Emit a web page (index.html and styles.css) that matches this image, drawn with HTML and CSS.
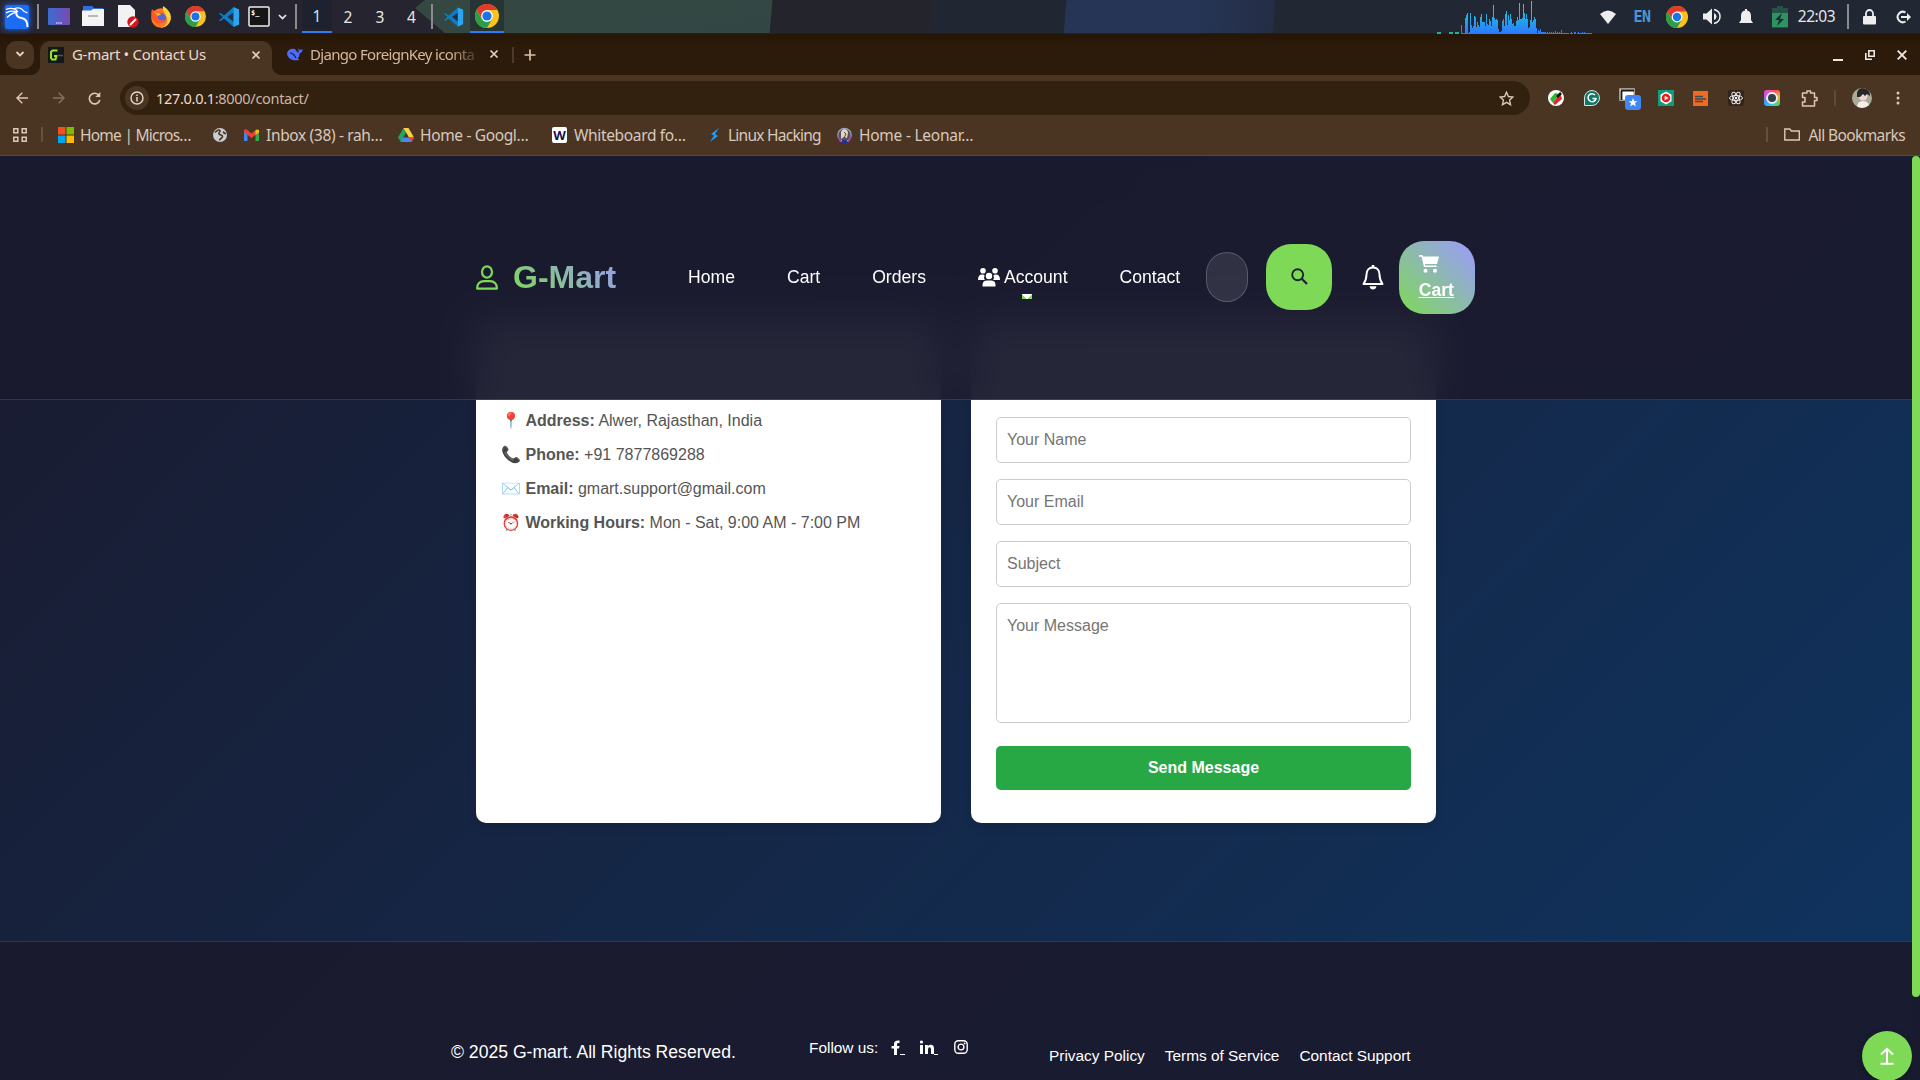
FILE: index.html
```
<!DOCTYPE html>
<html lang="en">
<head>
<meta charset="utf-8">
<title>G-mart • Contact Us</title>
<link rel="stylesheet" href="styles.css">
</head>
<body>
<svg class="defs" width="0" height="0" aria-hidden="true">
  <symbol id="chrome" viewBox="0 0 24 24"><circle cx="12" cy="12" r="12" fill="#fcc31e"/><path d="M12 6h10.4A12 12 0 0 0 1.6 6l5.2 9z" fill="#e3392c"/><path d="M1.6 6A12 12 0 0 0 12 24l5.2-9H6.8z" fill="#2b9f48"/><circle cx="12" cy="12" r="5.9" fill="#fff"/><circle cx="12" cy="12" r="4.6" fill="#1a73e8"/></symbol>
  <symbol id="vscode" viewBox="0 0 24 24"><path d="M17 1L6.500 10.400 2.500 7.300 1 8.100l4.200 3.900L1 15.900l1.500.8 4-3.100L17 23l1-5V6z" fill="#0c7dc4"/><path d="M17 6.800L10.300 12 17 17.200z" fill="#243040"/><path d="M17 1l6 2.800v16.400L17 23z" fill="#2ba6ee"/></symbol>
  <symbol id="close" viewBox="0 0 10 10"><path d="M1.500 1.500l7 7m0-7l-7 7" stroke="currentColor" stroke-width="1.700" fill="none"/></symbol>
</svg>

<header class="panel">
  <div class="panel-left">
    <span class="slot"><svg width="26" height="26" viewBox="0 0 26 26" class="kali"><rect x="1" y="1" width="24" height="24" rx="2" fill="#1c6cf5"/><path d="M2 5.500C7 3 12 5 14 8M2 9c4-3 8-2 11-1M3 13.500c4-4 7-5 10-5M10 5c4-2 8-1 9.500 2l4 2" fill="none" stroke="#fff" stroke-width="1.300"/><path d="M12.500 8c-1 4 2 5.500 5 6 4 .5 6 3 6 9" fill="none" stroke="#fff" stroke-width="2"/></svg></span>
    <span class="slot sep"></span>
    <span class="slot"><svg width="22" height="18"><defs><linearGradient id="dg"><stop offset="0" stop-color="#3c6cd4"/><stop offset="1" stop-color="#7a4aae"/></linearGradient></defs><rect width="22" height="17" rx="1" fill="url(#dg)"/><path d="M8 15h6" stroke="#fff" stroke-width="1.200" stroke-dasharray="1.500 .7"/></svg></span>
    <span class="slot"><svg width="22" height="21"><path d="M1 0h9l2 2h9v6H1z" fill="#2f6fe0"/><path d="M0 4.500h9l2-1.500h11v17H0z" fill="#f4f4f4"/><path d="M6 10h10" stroke="#b8b8b8" stroke-width="2"/></svg></span>
    <span class="slot"><svg width="21" height="23"><path d="M0 0h12l5 5v17H0z" fill="#f2f2f2"/><circle cx="15" cy="17" r="5.700" fill="#d8141c"/><path d="M12 20l6-6" stroke="#fff" stroke-width="2"/></svg></span>
    <span class="slot"><svg width="22" height="22" viewBox="0 0 22 22"><circle cx="11" cy="12" r="9.800" fill="#ff7a1f"/><path d="M13 0c5 3 9 8 7.600 13.500C19 19 14 22 10 21.500c6-1 8-5 7-9S12 5 13 0z" fill="#ffd23a"/><circle cx="11" cy="12" r="5" fill="#5b62d8"/><path d="M2 3l3 3c3-1 5 0 6 2-3 1-4 2-3 4 1 3 5 3 7 1-1 4-5 6-9 4S0 9 2 3z" fill="#ff5a26"/><path d="M3 5l3 2c2-.5 4 0 5 1.500L8 10z" fill="#ffb02a"/></svg></span>
    <span class="slot"><svg width="21" height="21"><use href="#chrome"/></svg></span>
    <span class="slot"><svg width="22" height="22"><use href="#vscode"/></svg></span>
    <span class="slot"><svg width="22" height="21"><rect x="1" y="1" width="20" height="19" rx="1" fill="#151515" stroke="#eee" stroke-width="1.500"/><text x="3" y="9" class="prompt">$_</text></svg></span>
    <span class="slot"><svg width="9" height="6"><path d="M1 1l3.500 3.500L8 1" stroke="#eee" stroke-width="1.600" fill="none"/></svg></span>
    <span class="slot sep"></span>
    <span class="slot ws active">1</span><span class="slot ws">2</span><span class="slot ws">3</span><span class="slot ws">4</span>
    <span class="slot sep"></span>
    <span class="slot"><svg width="21" height="22"><use href="#vscode"/></svg></span>
    <span class="slot task"><svg width="24" height="24"><use href="#chrome"/></svg></span>
  </div>
  <svg class="graph" width="160" height="34"><defs><linearGradient id="gg" x1="0" y1="0" x2="0" y2="34" gradientUnits="userSpaceOnUse"><stop offset="0" stop-color="#1de0d0"/><stop offset=".5" stop-color="#22aee8"/><stop offset="1" stop-color="#2b78ff"/></linearGradient></defs><path d="M0 33h4m8 0h4m2 0h4" stroke="#1de0c8" stroke-width="1.500"/><path stroke="url(#gg)" d="M24.500 34v-9m1 9v-1m1 1v-1m1 1v-1m1 1v-16m1 16v-19m1 19v-21m1 21v-1m1 1v-2m1 2v-21m1 21v-9m1 9v-6m1 6v-8m1 8v-18m1 18v-17m1 17v-7m1 7v-12m1 12v-9m1 9v-7m1 7v-17m1 17v-20m1 20v-12m1 12v-12m1 12v-12m1 12v-8m1 8v-20m1 20v-10m1 10v-9m1 9v-15m1 15v-13m1 13v-8m1 8v-17m1 17v-29m1 29v-16m1 16v-14m1 14v-15m1 15v-14m1 14v-5m1 5v-2m1 2v-2m1 2v-3m1 3v-13m1 13v-15m1 15v-8m1 8v-20m1 20v-23m1 23v-9m1 9v-19m1 19v-14m1 14v-20m1 20v-15m1 15v-10m1 10v-11m1 11v-8m1 8v-8m1 8v-13m1 13v-17m1 17v-14m1 14v-31m1 31v-15m1 15v-15m1 15v-16m1 16v-30m1 30v-21m1 21v-15m1 15v-20m1 20v-15m1 15v-6m1 6v-7m1 7v-14m1 14v-33m1 33v-12m1 12v-14m1 14v-17m1 17v-15m1 15v-6m1 6v-1m1 1v-4m1 4v-3m1 3v-5m1 5v-2m1 2v-2m1 2v-2m1 2v-2m1 2v-2m1 2v-1m1 1v-2m1 2v-1m1 1v-2m1 2v-1m1 1v-2m1 2v-1m1 1v-2m1 2v-1m1 1v-3m1 3v-1m1 1v-2m1 2v-1m1 1v-2m1 2v-1m1 1v-4m1 4v-1m1 1v-1m1 1v-1m1 1v-1m1 1v-1m1 1v-1m1 1v-1m2 1v-1m1 1v-2m1 2v-1m2 1v-2m1 2v-2m2 2v-1m1 1v-2m1 2v-1m1 1v-1m1 1v-1m1 1v-2m1 2v-1m1 1v-2m1 2v-1m1 1v-1m1 1v-1m1 1v-1m1 1v-1m1 1v-1m1 1v-1"/></svg>
  <div class="panel-right">
    <span class="slot"><svg width="16" height="14"><path d="M0 4Q8-3 16 4L8 14z" fill="#eee"/></svg></span>
    <span class="slot lang">EN</span>
    <span class="slot"><svg width="22" height="22"><use href="#chrome"/></svg></span>
    <span class="slot"><svg width="18" height="17" viewBox="0 0 18 17"><path d="M0 5.500h3.500L9 .5v16l-5.500-5H0z" fill="#eee"/><path d="M11 5v7q2.500-1 2.500-3.500T11 5z" fill="#eee"/><path d="M11 1.500q6 1.500 6 7t-6 7" stroke="#eee" stroke-width="1.500" fill="none"/></svg></span>
    <span class="slot"><svg width="14" height="16"><path d="M0 14l2-3V7q0-5 4-5.500V0h2v1.500q4 .5 4 5.500v4l2 3z" fill="#eee"/></svg></span>
    <span class="slot"><svg width="16" height="22"><path d="M5 0h6v2h5v20H0V2h5z" fill="#265048"/><path d="M0 7h16v14H0z" fill="#2d9460"/><path d="M10 7l-7 7h4l-2 6 7-7H8z" fill="#1c2c33"/></svg></span>
    <span class="slot clock">22:03</span>
    <span class="slot sep"></span>
    <span class="slot"><svg width="13" height="16"><rect y="7" width="13" height="8.500" rx="1" fill="#eee"/><path d="M3 8V4.500a3.500 3.500 0 0 1 7 0V8" stroke="#eee" stroke-width="1.800" fill="none"/></svg></span>
    <span class="slot"><svg width="16" height="14"><path d="M9.500 2.500a5.200 5.200 0 1 0 0 9" stroke="#eee" stroke-width="2" fill="none"/><path d="M5 6h6V3l4 4-4 4V8H5z" fill="#eee"/></svg></span>
  </div>
</header>

<div class="tabs">
  <span class="tab-search"><svg width="10" height="7"><path d="M1.500 1L5 4.500 8.500 1" stroke="#e9cfbb" stroke-width="1.900" fill="none"/></svg></span>
  <div class="tab on"><svg width="16" height="16"><rect width="16" height="16" fill="#15171a"/><path d="M9.500 3.500H4.500L3 5v6l1 1.500h3.500l1-3.500H6" stroke="#96e91c" stroke-width="2" fill="none"/><path d="M9 8.500h6" stroke="#555" stroke-width="1.500"/></svg><span class="tab-title t1">G-mart • Contact Us</span><svg class="x" width="10" height="10"><use href="#close"/></svg></div>
  <div class="tab off"><svg width="17" height="14" viewBox="0 0 17 14"><path d="M1 6c1-4 5-5 8-4 1 2 3 3 3 4 1-1 1-3 0-5l2 2 2.500-1c.5 2-1 4-3 4.500 0 3-1 4-2 5l2 1.500c-5 1-12 0-12.500-7z" fill="#4d6bfe"/><path d="M4 6c2 0 4 1 6 5" stroke="#2b1a0a" stroke-width="1.200" fill="none"/></svg><span class="tab-title t2">Django ForeignKey iconta</span><svg class="x" width="10" height="10"><use href="#close"/></svg></div>
  <span class="tab-sep"></span>
  <svg class="plus" width="12" height="12"><path d="M6 0.500v11M.5 6h11" stroke="#dcc0a8" stroke-width="1.700"/></svg>
  <div class="win"><svg width="10" height="12"><path d="M0 11h10" stroke="#f0e8e0" stroke-width="2"/></svg><svg width="10" height="10"><path d="M3.800.8h5.400v5.400H3.800zM.8 3v6.200H7" stroke="#f0e8e0" stroke-width="1.600" fill="none"/></svg><svg width="10" height="10"><path d="M.7.7l8.600 8.600m0-8.600L.7 9.300" stroke="#f0e8e0" stroke-width="1.900"/></svg></div>
</div>

<div class="toolbar">
  <span class="slot"><svg width="12" height="12"><path d="M6.300.8L1 6l5.300 5.200M1 6h11" stroke="#e3c6af" stroke-width="1.500" fill="none"/></svg></span>
  <span class="slot"><svg width="12" height="12"><path d="M5.700.8L11 6l-5.300 5.200M11 6H0" stroke="#88705e" stroke-width="1.500" fill="none"/></svg></span>
  <span class="slot"><svg width="13" height="13"><path d="M11 3.500A5.300 5.300 0 1 0 11.800 8" stroke="#e3c6af" stroke-width="1.600" fill="none"/><path d="M12.300 0v5h-5z" fill="#e3c6af"/></svg></span>
  <div class="omnibox"><span class="info"><svg width="14" height="14"><circle cx="7" cy="7" r="6" stroke="#e9d8ca" stroke-width="1.400" fill="none"/><path d="M7 6v4.500M7 3.500v1.400" stroke="#e9d8ca" stroke-width="1.500"/></svg></span><span class="url">127.0.0.1<i>:8000/contact/</i></span><svg class="star" width="15" height="15" viewBox="0 0 15 15"><path d="M7.500 1.200l1.900 4.300 4.600.5-3.400 3.100.9 4.600-4-2.400-4 2.400.9-4.600L1 6l4.600-.5z" stroke="#dcc6b4" stroke-width="1.400" fill="none"/></svg></div>
  <div class="exts">
    <svg width="16" height="16"><circle cx="8" cy="8" r="8" fill="#fff"/><path d="M2 9l5-6 4 1-6 9z" fill="#1dbf2a"/><path d="M12 3l2 6-7 6-2-2z" fill="#e8212a"/><path d="M13 3L9 7" stroke="#111" stroke-width="2.500"/></svg>
    <svg width="16" height="16"><path d="M8 .5a7.500 7.500 0 1 1 0 15H.5V8A7.500 7.500 0 0 1 8 .5z" fill="#117865" stroke="#d9e5e0"/><path d="M11 5a4 4 0 1 0 1 3.500H8.500" stroke="#fff" stroke-width="1.500" fill="none"/></svg>
    <svg class="badged" width="22" height="24" viewBox="0 0 22 24"><path d="M1 3h14v11H1z" fill="#fff" stroke="#c7bdb5" stroke-width="1.500"/><path d="M2 4.500h13M2.500 5v9" stroke="#1c1c1c" stroke-width="1.800" fill="none"/><rect x="6" y="9" width="16" height="15" rx="3" fill="#4285f4"/><path d="M14 12l1.200 3.200h3.200L15.900 17.200l.9 3.200L14 18.500l-2.800 1.900.9-3.200-2.500-2h3.200z" fill="#fff"/></svg>
    <svg width="16" height="16"><rect width="16" height="16" fill="#0f9d7e"/><path d="M8 1.500l5.500 3.200v6.600L8 14.500l-5.500-3.200V4.700z" fill="#fff"/><circle cx="8" cy="8" r="4.300" fill="#f01818"/><path d="M6.700 5.700v4.600l4-2.300z" fill="#fff"/></svg>
    <svg width="15" height="15"><rect width="15" height="15" fill="#f06a22"/><path d="M2 5.500h8M2 8h11M2 10.500h8" stroke="#354a52" stroke-width="1.300"/></svg>
    <svg width="16" height="16"><rect width="16" height="16" rx="2" fill="#33241a"/><g stroke="#eee" fill="none"><ellipse cx="8" cy="8" rx="6.500" ry="2.500"/><ellipse cx="8" cy="8" rx="6.500" ry="2.500" transform="rotate(60 8 8)"/><ellipse cx="8" cy="8" rx="6.500" ry="2.500" transform="rotate(120 8 8)"/></g><circle cx="8" cy="8" r="1.200" fill="#fff"/></svg>
    <span class="cam"><i></i></span>
    <svg width="17" height="17"><path d="M1.500 3H6V1h3.500v2h4v4.500H16v3h-2.500V16h-12v-4H4V7.500H1.500z" stroke="#e3c6af" stroke-width="1.500" fill="none" stroke-linejoin="round"/></svg>
    <span class="tsep"></span>
    <svg width="20" height="20"><clipPath id="av"><circle cx="10" cy="10" r="10"/></clipPath><g clip-path="url(#av)"><rect width="20" height="20" fill="#a9ab9a"/><circle cx="11" cy="8" r="4.500" fill="#ecd9cc"/><path d="M5 9Q4 0 11 0t7 8l-3-2-2 2-2-2-3 3z" fill="#2a2628"/><path d="M5 20q0-7 6-7t7 7z" fill="#f2eeea"/></g></svg>
    <svg width="4" height="14"><g fill="#e3c6af"><circle cx="2" cy="2" r="1.500"/><circle cx="2" cy="7" r="1.500"/><circle cx="2" cy="12" r="1.500"/></g></svg>
  </div>
</div>

<div class="bookmarks">
  <svg width="14" height="14" class="apps"><g fill="none" stroke="#ddc9b9" stroke-width="1.500"><path d="M.8.800h4v4h-4zM9.200.8h4v4h-4zM.8 9.200h4v4h-4zM9.200 9.200h4v4h-4z"/></g></svg>
  <span class="bsep"></span>
  <a class="bm b1"><svg width="16" height="16"><path d="M0 0h7.500v7.500H0z" fill="#f25022"/><path d="M8.500 0H16v7.500H8.500z" fill="#7fba00"/><path d="M0 8.500h7.500V16H0z" fill="#00a4ef"/><path d="M8.500 8.500H16V16H8.500z" fill="#ffb900"/></svg><span>Home | Micros…</span></a>
  <a class="bm b2"><svg width="14" height="14"><circle cx="7" cy="7" r="7" fill="#c9ccd1"/><path d="M2 4.500c2-2.500 4-3 5-2s-2 2-1 3.500 3.500.5 3.500 2.500-2.500 1.500-3 4M11 3.500c-1 1 0 2 2 2" stroke="#4a3523" stroke-width="1.600" fill="none"/></svg></a>
  <a class="bm b3"><svg width="15" height="12"><path d="M0 1.500V12h3.500V5z" fill="#4285f4"/><path d="M11.500 5v7H15V1.500z" fill="#34a853"/><path d="M0 1l2-1 5.500 4.500L13 0l2 1v2L7.500 9 0 3z" fill="#ea4335"/><path d="M11.500 1L15 1v2.500l-3.500 2.500z" fill="#fbbc04"/></svg><span>Inbox (38) - rah…</span></a>
  <a class="bm b4"><svg width="16" height="14"><path d="M5.500 0h5L3 14 0 9.500z" fill="#1fa463"/><path d="M5.500 0h5L16 9.500h-5z" fill="#ffcf48"/><path d="M2.500 14L5 9.500h11L13.500 14z" fill="#4688f4"/><path d="M11 9.500h5L13.500 14z" fill="#e94435"/></svg><span>Home - Googl…</span></a>
  <a class="bm b5"><b class="wicon">W</b><span>Whiteboard fo…</span></a>
  <a class="bm b6"><svg width="15" height="14"><path d="M12 0L4 6l3 1.500L3 14l8-6-3-2z" fill="#1a9cff"/></svg><span>Linux Hacking</span></a>
  <a class="bm b7"><svg width="15" height="16"><circle cx="7.500" cy="8" r="6.700" fill="#55505c" stroke="#98a5bd" stroke-width="1.200"/><path d="M4 5q1-3 4-3 3 1 3 4l-1 5-3-1-3 2z" fill="#ded5c3"/><path d="M7 5l2 2-2 4" stroke="#5e3b32" fill="none"/><path d="M1 10l3 5M14 10l-3 5" stroke="#ad38ac" stroke-width="1.500"/><path d="M5 13h5v3H5z" fill="#26348d"/></svg><span>Home - Leonar…</span></a>
  <div class="allbm"><span class="bsep"></span><svg width="16" height="13"><path d="M.8 1h5l1.500 2h8v9H.8z" stroke="#ddc9b9" stroke-width="1.400" fill="none"/></svg><span>All Bookmarks</span></div>
</div>

<div class="page">
  <main class="view">
    <nav class="nav">
      <svg class="user" width="22" height="26" viewBox="0 0 22 26"><g fill="none" stroke="#7ed957" stroke-width="2.200"><ellipse cx="11" cy="7" rx="5" ry="5.700"/><path d="M1.200 23.700c-.3-5 2.800-7.500 6.800-7.500h6c4 0 7.100 2.500 6.800 7.500z" stroke-linejoin="round"/></g></svg>
      <span class="brand">G-Mart</span>
      <a class="n1">Home</a><a class="n2">Cart</a><a class="n3">Orders</a>
      <a class="n4"><svg width="22" height="19" viewBox="0 0 22 19"><g fill="#fff"><circle cx="5" cy="2.800" r="2.800"/><circle cx="17" cy="2.800" r="2.800"/><path d="M0 12q0-5.500 4-5.500 2 0 2.600 1Q5.500 9.500 6.800 12zM22 12q0-5.500-4-5.500-2 0-2.600 1 1.100 2-.2 4.500z"/><circle cx="11" cy="8" r="3.200"/><path d="M4.500 18.500q-.5-6 4-6h5q4.500 0 4 6z"/></g></svg>Account<i class="caret"></i></a>
      <a class="n5">Contact</a>
      <input class="q" type="text" aria-label="Search">
      <button class="go"><svg width="17" height="17"><circle cx="6.700" cy="6.700" r="5.500" stroke="#1c2430" stroke-width="1.900" fill="none"/><path d="M10.500 10.500L16 16" stroke="#1c2430" stroke-width="2.300"/></svg></button>
      <svg class="bell" width="22" height="25" viewBox="0 0 22 25"><path d="M11 2.500c-4.500 0-6.500 3.300-6.500 7 0 5-1.200 7-3 9.500h19c-1.800-2.500-3-4.500-3-9.500 0-3.700-2-7-6.500-7z" fill="none" stroke="#fff" stroke-width="2" stroke-linejoin="round"/><path d="M11 0v3" stroke="#fff" stroke-width="2.600"/><path d="M7.500 21.300h7q-.8 3.200-3.500 3.200t-3.500-3.200z" fill="#fff"/></svg>
      <a class="cart"><svg width="20" height="18" viewBox="0 0 20 18"><g fill="#fff"><path d="M0 0h3.500l.6 1.500H20L18 9H5.900l.3 1.500h11.300V12H5L2.600 1.700H0z"/><circle cx="6.500" cy="15.800" r="2"/><circle cx="16" cy="15.800" r="2"/></g></svg><span>Cart</span></a>
    </nav>
    <section class="cards">
      <div class="card info-card">
        <p>📍 <b>Address:</b> Alwer, Rajasthan, India</p>
        <p>📞 <b>Phone:</b> +91 7877869288</p>
        <p>✉️ <b>Email:</b> gmart.support@gmail.com</p>
        <p>⏰ <b>Working Hours:</b> Mon - Sat, 9:00 AM - 7:00 PM</p>
      </div>
      <form class="card form-card">
        <input type="text" placeholder="Your Name"><input type="text" placeholder="Your Email"><input type="text" placeholder="Subject">
        <textarea placeholder="Your Message"></textarea>
        <button type="button">Send Message</button>
      </form>
    </section>
    <footer class="foot">
      <span class="copy">© 2025 G-mart. All Rights Reserved.</span>
      <div class="follow"><span>Follow us:</span>
        <svg class="fb" width="14" height="16"><path d="M3 15V8.500H.5V6H3V4q0-4 5.500-3.500V3C6.500 2.800 6 3.300 6 4.500V6h2.500L8 8.500H6V15z" fill="#fff"/><path d="M9 14.500h5" stroke="#fff"/></svg>
        <svg class="li" width="18" height="15"><path d="M0 5h3v9H0zM5 5h2.800v1.200Q9 4.700 11 4.800q3 .2 3 4V14h-3V9.500Q11 7.300 9.500 7.300T8 9.500V14H5z" fill="#fff"/><circle cx="1.500" cy="2" r="1.600" fill="#fff"/><path d="M14 14.500h4" stroke="#fff"/></svg>
        <svg class="ig" width="14" height="14"><rect x=".8" y=".8" width="12.400" height="12.400" rx="3.500" stroke="#fff" stroke-width="1.400" fill="none"/><circle cx="7" cy="7" r="2.900" stroke="#fff" stroke-width="1.400" fill="none"/><circle cx="10.600" cy="3.400" r=".9" fill="#fff"/></svg>
      </div>
      <div class="links"><a>Privacy Policy</a><a>Terms of Service</a><a>Contact Support</a></div>
    </footer>
    <button class="top" aria-label="Back to top"><svg width="14" height="18"><path d="M7 17V2M1 7.500L7 1.800l6 5.700M.5 16.800h13" stroke="#fff" stroke-width="2" fill="none"/></svg></button>
  </main>
  <div class="scrollbar"><div class="thumb"></div></div>
</div>
</body>
</html>
```
FILE: styles.css
```
* { box-sizing: border-box; }
body { margin: 0; width: 1920px; height: 1080px; overflow: hidden; background: #4a3523; font-family: "Noto Sans", sans-serif; }
svg { display: block; flex: none; }
.defs { position: absolute; }

/* Desktop panel */
.panel { position: relative; isolation: isolate; display: flex; height: 34px; color: #e6e6e6; background: #26252f; border-bottom: 1px solid #1d2127; }
.panel::before { content: ""; position: absolute; z-index: -1; inset: 0; clip-path: polygon(425px 0, 100% 0, 100% 100%, 445px 100%, 415px 8px); background: linear-gradient(95deg, transparent 769px, #24242d 770px 927px, #202733 931px 1062px, #263556 1063px 1190px, #242d45 1270px, #212733 1271px), linear-gradient(170deg, #37483f, #2c454a); }
.panel-left { display: grid; grid-template-columns: 34px 8px 34px 34px 36px 30px 38px 30px 30px 16px 12px 30px 32px 32px 31px 10px 33px 34px; }
.slot { display: flex; align-items: center; justify-content: center; }
.kali { filter: drop-shadow(0 0 3px #1c6cf5); }
.sep::before { content: ""; width: 2px; height: 25px; background: #8b8b8f; }
.prompt { font: bold 7px "DejaVu Sans Mono", monospace; fill: #fff; }
.ws { font-size: 15.500px; }
.ws.active { background: #1d222e; color: #cfe4f0; }
.ws.active, .task { border-bottom: 2px solid #2b7cf6; }
.task { background: #263434; }
.graph { margin-left: 933px; }
.panel-right { display: grid; grid-template-columns: 34px 34px 36px 33px 36px 32px 41px 22px 20px 49px; margin-left: -6px; }
.lang { color: #4a97d6; font: bold 15px "DejaVu Sans Mono", monospace; letter-spacing: -.5px; }
.clock { padding-bottom: 1px; font-size: 15.500px; letter-spacing: -.4px; }

/* Browser tab strip */
.tabs { display: flex; align-items: center; height: 41px; padding: 0 13px 0 6px; background: linear-gradient(#261605, #2c1b0a 14px); }
.tab-search { display: flex; align-items: center; justify-content: center; width: 28px; height: 28px; border-radius: 10px; background: #4a3523; }
.tab { display: flex; align-items: center; }
.tab.on { position: relative; align-self: flex-end; width: 232px; height: 34px; margin-left: 6px; padding: 0 11px 7px 8px; border-radius: 10px 10px 0 0; background: #4a3523; color: #eadacd; }
.tab.on::before, .tab.on::after { content: ""; position: absolute; bottom: 0; width: 10px; height: 10px; }
.tab.on::before { left: -10px; background: radial-gradient(circle at 0 0, transparent 10px, #4a3523 10.500px); }
.tab.on::after { right: -10px; background: radial-gradient(circle at 100% 0, transparent 10px, #4a3523 10.500px); }
.tab.off { width: 237px; padding: 0 10px 1px 14px; color: #d5b79f; }
.tab-title { margin: 0 0 1px 8px; font-size: 15px; white-space: nowrap; }
.t1 { letter-spacing: -.3px; }
.t2 { width: 171px; margin-left: 7px; letter-spacing: -.68px; mask-image: linear-gradient(to right, #000 82%, transparent); }
.x { margin-left: auto; color: #e9d0bd; }
.tab-sep { width: 2px; height: 16px; margin-left: 3px; background: #4f3a28; }
.plus { margin-left: 10px; }
.win { display: flex; align-items: center; gap: 22px; margin-left: auto; }

/* Address bar row */
.toolbar { display: grid; grid-template-columns: 40px 34px 36px 1418px 1fr; align-items: center; height: 46px; padding-left: 2px; background: #4a3523; }
.omnibox { display: flex; align-items: center; height: 34px; margin-left: 8px; padding: 0 16px 0 5px; border-radius: 17px; background: #33210f; }
.info { display: flex; align-items: center; justify-content: center; width: 24px; height: 24px; border-radius: 50%; background: #4a3523; }
.url { margin: 0 0 1px 7px; font-size: 14.500px; letter-spacing: -.3px; color: #ecdccf; }
.url i { font-style: normal; color: #cbb7a7; }
.star { margin-left: auto; }
.exts { display: grid; grid-template-columns: 36px 36px 40px 32px 36px 36px 36px 38px 14px 40px 32px; align-items: center; justify-items: center; margin-left: 8px; }
.badged { margin-right: 1px; }
.cam { display: flex; align-items: center; justify-content: center; width: 16px; height: 16px; border-radius: 3px; background: conic-gradient(#36d0f0, #2aa6ff, #b058f0, #f04ec0, #ff5050, #f0b030, #60d060, #36d0f0); transform: rotate(180deg); }
.cam i { width: 12px; height: 12px; border-radius: 50%; background: #31414f; border: 2px solid #eee; }
.tsep { width: 2px; height: 16px; background: #67492f; }

/* Bookmarks */
.bookmarks { display: flex; align-items: center; height: 35px; padding: 0 15px 7px 13px; border-bottom: 1px solid #5c4a3b; background: #4a3523; color: #d9c8bb; font-size: 15.500px; white-space: nowrap; }
.bsep { width: 2px; height: 15px; background: #67503a; }
.apps { margin-right: 14px; }
.bm { display: flex; align-items: center; gap: 6px; }
.bm span, .allbm { letter-spacing: -.35px; }
.b1 { width: 155px; margin-left: 15px; }
.b1 span { letter-spacing: -.75px; }
.b2 { width: 31px; }
.b3 { width: 154px; gap: 7px; }
.b4 { width: 154px; }
.b5 { width: 155px; gap: 7px; }
.b6 { width: 130px; }
.b6 span { letter-spacing: -.75px; }
.b7 { gap: 7px; }
.b7 span { letter-spacing: -.25px; }
.wicon { width: 15px; height: 16px; border-radius: 2px; background: #fff; color: #14104a; font-size: 13px; line-height: 16px; text-align: center; }
.allbm { display: flex; align-items: center; margin-left: auto; letter-spacing: -.6px; }
.allbm svg { margin: 0 8px 0 16px; }

/* Web page */
.page { display: flex; height: 924px; font-family: "Liberation Sans", Arial, sans-serif; }
.view { position: relative; width: 1912px; overflow: hidden; background: linear-gradient(135deg, #1a1a2e 0%, #0f3460 100%); }
.nav { position: relative; z-index: 2; display: flex; align-items: center; height: 244px; padding-left: 476px; border-bottom: 1px solid rgba(255,255,255,.12); background: rgba(26,26,46,.95); backdrop-filter: blur(20px); color: #fff; font-size: 17.600px; }
.user { margin-left: -.5px; }
.brand { width: 104px; margin: 0 71px 0 15.500px; background: linear-gradient(45deg, #7ed957, #9b9bf5); background-clip: text; color: transparent; font-size: 32px; font-weight: bold; white-space: nowrap; }
.n1, .n2, .n3, .n5 { margin-right: 52px; }
.n4 { position: relative; display: flex; align-items: center; gap: 4px; margin-right: 52px; }
.caret { position: absolute; left: 44px; bottom: -11px; width: 10px; height: 5px; background: linear-gradient(to bottom right, transparent 50%, #7ed957 52%) right / 50% 100% no-repeat, linear-gradient(to bottom left, transparent 50%, #7ed957 52%) left / 50% 100% no-repeat, #fff; }
.n5 { margin-right: 26px; }
.q { width: 42px; height: 50px; margin: 0 0 2px; padding: 0; border: 1px solid rgba(255,255,255,.2); border-radius: 21px; background: rgba(255,255,255,.1); }
.go { display: flex; align-items: center; justify-content: center; width: 66px; height: 66px; margin: 0 0 2px 18px; padding: 0; border: 0; border-radius: 25px; background: #7ed957; }
.bell { margin: 0 15px 1px 29.500px; }
.cart { display: flex; flex-direction: column; gap: 7px; width: 76px; height: 73px; padding: 14px 0 0 20px; border-radius: 25px; background: linear-gradient(45deg, #7ed957, #9b9bff); font-weight: bold; text-decoration: underline; }

.cards { display: flex; gap: 30px; height: 541px; padding-left: 476px; }
.card { width: 465px; height: 503px; margin-top: -80px; padding: 80px 25px 0; border-radius: 10px; background: #fff; box-shadow: 0 4px 10px rgba(0,0,0,.1); }
.info-card p { margin: 0 0 10px; color: #555; font-size: 16px; line-height: 24px; }
.info-card p:first-child { margin-top: 9px; }
.form-card input, .form-card textarea { display: block; width: 415px; height: 46px; margin: 0 0 16px; padding: 10px; border: 1px solid #ccc; border-radius: 5px; background: #fff; font: 16px "Liberation Sans", Arial, sans-serif; }
.form-card input:first-child { margin-top: 17px; }
.form-card textarea { height: 120px; padding-top: 13px; margin-bottom: 23px; resize: none; }
.form-card button { width: 415px; height: 44px; border: 0; border-radius: 5px; background: #28a745; color: #fff; font: bold 16px "Liberation Sans", Arial, sans-serif; }

.foot { display: flex; align-items: flex-start; height: 160px; padding: 99px 0 0 451px; border-top: 1px solid rgba(255,255,255,.12); background: rgba(26,26,46,.95); color: #fff; font-size: 15.400px; white-space: nowrap; }
.copy { width: 358px; font-size: 17.600px; line-height: 22px; }
.follow { display: flex; align-items: flex-start; width: 240px; margin-top: -2px; line-height: 17px; }
.follow svg { margin-top: 1px; }
.follow .fb { margin-left: 12.500px; }
.follow .li { margin: 1px 15.500px 0 15.500px; }
.links { display: flex; gap: 20px; margin-top: 6px; line-height: 18px; }
.top { position: absolute; right: 0; bottom: -1px; display: flex; align-items: center; justify-content: center; width: 50px; height: 50px; padding: 0; border: 0; border-radius: 50%; background: #7ed957; box-shadow: 0 2px 6px rgba(0,0,0,.3); }
.scrollbar { width: 8px; background: #1a1a2e; }
.thumb { height: 841px; border-radius: 4px; background: #7ed957; }
```
